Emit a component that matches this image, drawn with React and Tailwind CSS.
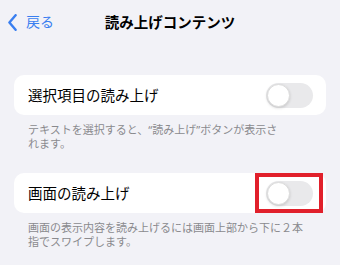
const font = { fontFamily: '"Noto Sans", "Noto Sans CJK JP", sans-serif' };

const Toggle = () => (
  <div className="w-[47px] h-[25px] rounded-full bg-[#e9e9eb] p-[1px] flex items-center">
    <div className="w-[23px] h-[23px] rounded-full bg-white border border-[#dcdcdc] shadow-[0_1px_3px_rgba(0,0,0,0.15)]" />
  </div>
);

const Row = ({ label, marked }) => (
  <div className="relative mx-[14px] h-[40px] rounded-[10px] bg-white flex items-center justify-between pl-[14px] pr-[13px]">
    <span className="text-[14.5px] text-black leading-none">{label}</span>
    <Toggle />
    {marked && (
      <div className="absolute right-[3px] top-0 w-[68px] h-[40px] border-4 border-[#e1202b]" />
    )}
  </div>
);

const Note = ({ children }) => (
  <p className="ml-[28px] mr-[14px] mt-[8px] text-[11px] leading-[14px] text-[#8a8a8e] whitespace-nowrap">{children}</p>
);

export default function App() {
  return (
    <div className="w-[340px] h-[265px] bg-[#f2f2f7] overflow-hidden" style={font}>
      {/* nav */}
      <div className="h-[44px] grid grid-cols-[1fr_auto_1fr] items-center">
        <div className="flex items-center pl-[8px] gap-[9px] text-[#3a7ff0]">
          <svg width="9" height="17" viewBox="0 0 9 17" fill="none">
            <path d="M7.6 1.2 L1.4 8.5 L7.6 15.8" stroke="currentColor" strokeWidth="2.4" strokeLinecap="round" strokeLinejoin="round" />
          </svg>
          <span className="text-[14px] leading-none">戻る</span>
        </div>
        <div className="text-[14.5px] font-bold text-black leading-none">読み上げコンテンツ</div>
        <div />
      </div>

      <div className="h-[31px]" />
      <Row label="選択項目の読み上げ" />
      <Note>
        テキストを選択すると、“読み上げ”ボタンが表示さ
        <br />
        れます。
      </Note>

      <div className="h-[22px]" />
      <Row label="画面の読み上げ" marked />
      <Note>
        画面の表示内容を読み上げるには画面上部から下に２本
        <br />
        指でスワイプします。
      </Note>
    </div>
  );
}
